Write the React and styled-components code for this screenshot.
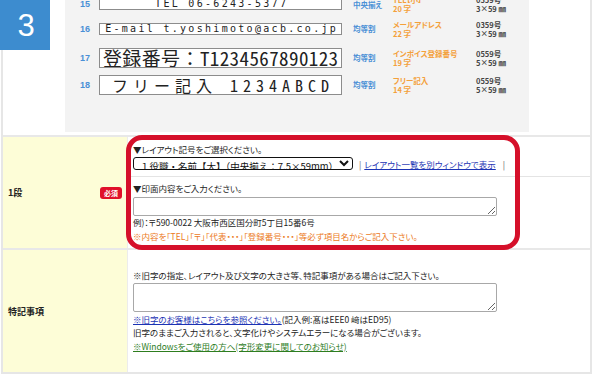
import React from 'react';
import styled, { createGlobalStyle } from 'styled-components';

const GlobalStyle = createGlobalStyle`
  html, body { margin: 0; padding: 0; background: #fff; }
  body {
    font-family: "Noto Sans CJK JP", "Noto Sans", sans-serif;
    color: #222;
    width: 600px;
    height: 382px;
    overflow: hidden;
  }
  * { box-sizing: border-box; }
`;

const Page = styled.div`
  position: relative;
  width: 600px;
  height: 382px;
  overflow: hidden;
  padding-left: 1px;
`;

const Step = styled.div`
  position: absolute;
  left: 0;
  top: 0;
  width: 50px;
  height: 50px;
  background: #3d8ccf;
  color: #fff;
  display: flex;
  align-items: center;
  justify-content: center;
  font-family: "Liberation Sans", Arial, sans-serif;
  font-size: 31px;
  line-height: 1;
  padding-left: 2px;
  z-index: 2;
`;

const Table = styled.div`
  width: 591px;
  border-left: 2px solid #e6e6e6;
  border-right: 2px solid #e6e6e6;
  border-bottom: 2px solid #e6e6e6;
`;

const SampleRow = styled.div`
  height: 137px;
  padding-left: 62px;
  border-bottom: 2px solid #e8e8e8;
`;

const Panel = styled.div`
  width: 464px;
  height: 132px;
  background: #f3f3f3;
  overflow: hidden;
`;

const SampleList = styled.div`
  margin-top: -8px;
  padding-left: 15px;
`;

const Sample = styled.div`
  display: grid;
  grid-template-columns: 19px 243px 51px 83px auto;
  align-items: center;
  height: ${(p) => p.$h}px;
`;

const Num = styled.span`
  font-family: "Liberation Sans", Arial, sans-serif;
  font-weight: 700;
  font-size: 9px;
  color: #4a90d6;
`;

const Box = styled.div`
  width: 243px;
  height: ${(p) => (p.$big ? 20 : 12)}px;
  background: #fff;
  border: 1px solid #8c8c8c;
  display: flex;
  align-items: center;
  justify-content: center;
  white-space: nowrap;
  overflow: hidden;
  color: #222;
  font-family: ${(p) =>
    p.$big
      ? '"Noto Sans Mono CJK JP", "Noto Sans CJK JP", sans-serif'
      : '"DejaVu Sans Mono", "Liberation Mono", monospace'};
  font-size: ${(p) => p.$size}px;
  letter-spacing: ${(p) => p.$ls}px;
  line-height: 1;
  padding-left: ${(p) => p.$ls}px;
`;

const Align = styled.span`
  padding-left: 11px;
  font-size: 7.5px;
  font-weight: 700;
  color: #4a90d6;
  font-feature-settings: "palt";
`;

const Spec = styled.div`
  display: flex;
  flex-direction: column;
  font-size: 7.5px;
  line-height: 9px;
  font-weight: 700;
  color: ${(p) => (p.$orange ? '#f4a03a' : '#444')};
  font-feature-settings: "palt";
  white-space: nowrap;
`;

const FormRow = styled.div`
  position: relative;
  display: grid;
  grid-template-columns: 125px 1fr;
  height: ${(p) => p.$h}px;
  border-bottom: ${(p) => (p.$last ? 'none' : '2px solid #e8e8e8')};
`;

const Label = styled.div`
  background: #fdfdd7;
  border-right: 1px solid #ececec;
  display: flex;
  align-items: center;
  justify-content: space-between;
  padding: 0 5px 0 5px;
  font-size: 9px;
  font-weight: 700;
  color: #222;
`;

const Required = styled.span`
  background: #e0102a;
  color: #fff;
  font-size: 7px;
  font-weight: 700;
  border-radius: 3px;
  width: 22px;
  height: 12px;
  display: flex;
  align-items: center;
  justify-content: center;
`;

const Cell = styled.div`
  display: flex;
  flex-direction: column;
`;

const SubRow = styled.div`
  display: flex;
  flex-direction: column;
  justify-content: center;
  padding-left: 5px;
  height: ${(p) => p.$h}px;
  border-bottom: ${(p) => (p.$divider ? '1px solid #e4e4e4' : 'none')};
  font-size: 8.5px;
  font-feature-settings: "palt";
`;

const Line = styled.div`
  line-height: ${(p) => p.$lh || 12}px;
  white-space: nowrap;
  color: ${(p) => p.$color || '#222'};
`;

const Controls = styled.div`
  display: flex;
  align-items: center;
  margin-top: 2px;
  white-space: nowrap;
`;

const Select = styled.select`
  width: 220px;
  height: 13px;
  font-family: "Noto Sans CJK JP", sans-serif;
  font-size: 9.5px;
  line-height: 11px;
  padding: 0 0 0 2px;
  border: 1px solid #111;
  border-radius: 3px;
  background: #fff;
  color: #111;
  font-feature-settings: normal;
`;

const Sep = styled.span`
  color: #555;
  margin: 0 ${(p) => p.$r || 4}px 0 ${(p) => p.$l || 4}px;
`;

const Link = styled.a`
  color: ${(p) => (p.$green ? '#2e7d1f' : '#1c33b4')};
  text-decoration: underline;
`;

const TextArea = styled.textarea`
  display: block;
  width: 364px;
  height: ${(p) => p.$h}px;
  border: 1px solid #a8a8a8;
  border-radius: 2px;
  padding: 0;
  margin: ${(p) => p.$m || '0'};
  background: #fff;
`;

const Highlight = styled.div`
  position: absolute;
  left: 123px;
  top: -2px;
  width: 394px;
  height: 115px;
  border: 5px solid #d5102a;
  border-radius: 16px;
  pointer-events: none;
`;

const samples = [
  { no: 15, h: 24, text: 'TEL 06-6243-5377', big: false, size: 10, ls: 2.3, align: '中央揃え', name: 'TEL【小】', chars: '20 字', code: '0359号', dim: '3×59 ㎜' },
  { no: 16, h: 25, text: 'E-mail t.yoshimoto@acb.co.jp', big: false, size: 10, ls: 2.3, align: '均等割', name: 'メールアドレス', chars: '22 字', code: '0359号', dim: '3×59 ㎜' },
  { no: 17, h: 33, text: '登録番号：T1234567890123', big: true, size: 19, ls: 0.4, align: '均等割', name: 'インボイス登録番号', chars: '19 字', code: '0559号', dim: '5×59 ㎜' },
  { no: 18, h: 21, text: 'フリー記入 1234ABCD', big: true, size: 16, ls: 5, align: '均等割', name: 'フリー記入', chars: '14 字', code: '0559号', dim: '5×59 ㎜' },
];

export default function App() {
  return (
    <>
      <GlobalStyle />
      <Page>
        <Step>3</Step>
        <Table>
          <SampleRow>
            <Panel>
              <SampleList>
                {samples.map((s) => (
                  <Sample key={s.no} $h={s.h}>
                    <Num>{s.no}</Num>
                    <Box $big={s.big} $size={s.size} $ls={s.ls}>{s.text}</Box>
                    <Align>{s.align}</Align>
                    <Spec $orange>
                      <span>{s.name}</span>
                      <span>{s.chars}</span>
                    </Spec>
                    <Spec>
                      <span>{s.code}</span>
                      <span>{s.dim}</span>
                    </Spec>
                  </Sample>
                ))}
              </SampleList>
            </Panel>
          </SampleRow>

          <FormRow $h={113}>
            <Label>
              <span>1段</span>
              <Required>必須</Required>
            </Label>
            <Cell>
              <SubRow $h={40} $divider>
                <Line>▼レイアウト記号をご選択ください。</Line>
                <Controls>
                  <Select defaultValue="1">
                    <option value="1">１役職・名前【大】（中央揃え：7.5×59mm）</option>
                  </Select>
                  <Sep $l={6} $r={3}>|</Sep>
                  <Link href="#">レイアウト一覧を別ウィンドウで表示</Link>
                  <Sep $l={7}>|</Sep>
                </Controls>
              </SubRow>
              <SubRow $h={70}>
                <Line>▼印面内容をご入力ください。</Line>
                <TextArea $h={19} $m="3px 0 0 0" />
                <Line $lh={13}>例)：〒590-0022 大阪市西区国分町5丁目15番6号</Line>
                <Line $lh={14} $color="#ec7a1c">※内容を「TEL」「〒」「代表・・・」「登録番号・・・」等必ず項目名からご記入下さい。</Line>
              </SubRow>
            </Cell>
            <Highlight />
          </FormRow>

          <FormRow $h={122} $last>
            <Label>
              <span>特記事項</span>
            </Label>
            <Cell>
              <SubRow $h={122}>
                <Line>※旧字の指定、レイアウト及び文字の大きさ等、特記事項がある場合はご記入下さい。</Line>
                <TextArea $h={29} $m="2px 0 1px 0" />
                <Line $lh={13.5}>
                  <Link href="#">※旧字のお客様はこちらを参照ください。</Link>(記入例:髙はEEE0 﨑はED95)
                </Line>
                <Line $lh={13.5}>旧字のままご入力されると、文字化けやシステムエラーになる場合がございます。</Line>
                <Line $lh={13.5}>
                  <Link href="#" $green>※Windowsをご使用の方へ(字形変更に関してのお知らせ)</Link>
                </Line>
              </SubRow>
            </Cell>
          </FormRow>
        </Table>
      </Page>
    </>
  );
}
